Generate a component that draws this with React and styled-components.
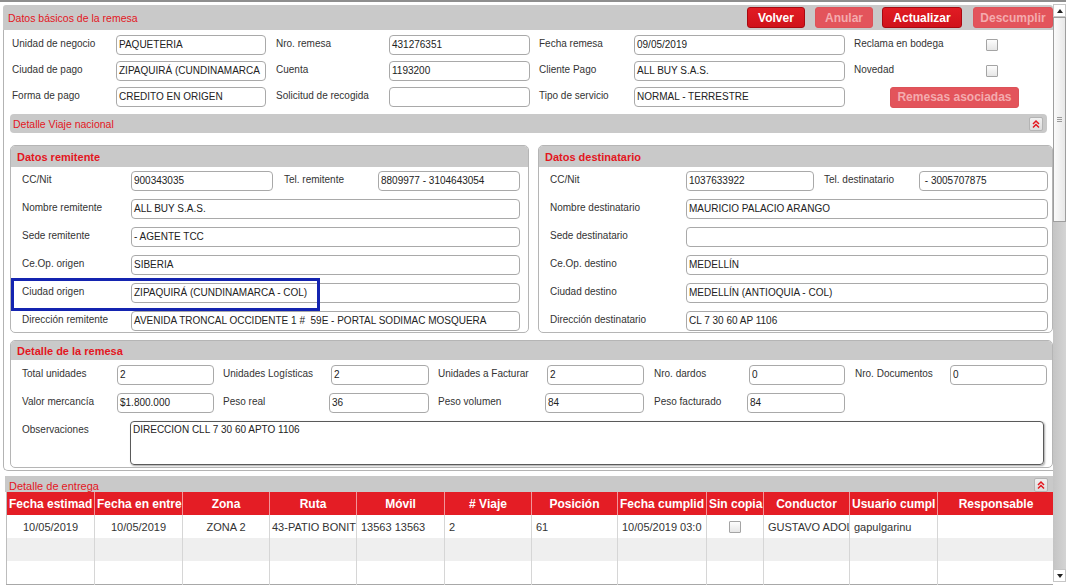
import React from "react";
import styled, { createGlobalStyle } from "styled-components";

const GlobalStyle = createGlobalStyle`
  html, body {
    margin: 0;
    padding: 0;
    background: #fff;
  }
  body {
    font-family: "Liberation Sans", Arial, sans-serif;
    font-size: 10px;
    color: #333;
  }
`;

const RED = "#e3161e";
const BAR = "#c9c9c9";

const Page = styled.div`
  width: 1075px;
  height: 585px;
  overflow: hidden;
  background: #fff;
`;

const Window = styled.div`
  width: 1066px;
  height: 585px;
  box-sizing: border-box;
  border-top: 2px solid #8e8e8e;
  display: flex;
`;

const Main = styled.div`
  width: 1053px;
  padding-top: 3px;
  display: flex;
  flex-direction: column;
  overflow: hidden;
`;

/* ---------- section 1 header ---------- */
const TopBar = styled.div`
  margin-left: 3px;
  height: 26px;
  background: ${BAR};
  border-radius: 3px 3px 0 0;
  display: flex;
  align-items: center;
  padding-left: 5px;
`;

const BarTitle = styled.span`
  color: ${RED};
  font-size: 10.5px;
`;

const Buttons = styled.div`
  margin-left: auto;
  display: flex;
  align-items: center;
`;

const Btn = styled.button`
  height: 21px;
  width: ${(p) => p.$w}px;
  margin-left: ${(p) => p.$ml || 0}px;
  padding: 0;
  font-family: "Liberation Sans", Arial, sans-serif;
  font-size: 12px;
  font-weight: bold;
  border-radius: 3px;
  border: 1px solid ${(p) => (p.$off ? "#dc5258" : "#a80910")};
  background: ${(p) =>
    p.$off ? "#e3545b" : "linear-gradient(#e11c24, #d0121a)"};
  color: ${(p) => (p.$off ? "#f4abae" : "#fff")};
`;

/* ---------- section 1 body ---------- */
const Body = styled.div`
  margin-left: 3px;
  border-left: 1px solid #b3b3b3;
  border-bottom: 1px solid #b3b3b3;
  border-radius: 0 0 0 5px;
  padding: 5px 0 2px 6px;
`;

const Row = styled.div`
  position: relative;
  display: flex;
  align-items: center;
  height: ${(p) => p.$h || 20}px;
  padding-left: ${(p) => p.$pl || 0}px;
  margin-bottom: ${(p) => (p.$last ? 0 : p.$mb ?? 6)}px;
`;

const Label = styled.span`
  width: ${(p) => p.$w}px;
  margin-left: ${(p) => p.$ml || 0}px;
  flex-shrink: 0;
  color: #333;
  font-size: 10px;
  white-space: nowrap;
  align-self: flex-start;
  padding-top: 3px;
`;

const Input = styled.div`
  box-sizing: border-box;
  width: ${(p) => p.$w}px;
  height: 20px;
  flex-shrink: 0;
  border: 1px solid #a9a9a9;
  border-radius: 4px;
  background: #fff;
  padding: 0 2px;
  font-size: 10px;
  line-height: 18px;
  color: #222;
  white-space: pre;
  overflow: hidden;
`;

const TextArea = styled.div`
  box-sizing: border-box;
  width: ${(p) => p.$w}px;
  height: 44px;
  border: 1px solid #5a5a5a;
  border-radius: 4px;
  box-shadow: 1px 1px 2px rgba(0, 0, 0, 0.35);
  padding: 2px 2px;
  font-size: 10px;
  line-height: 12px;
  color: #222;
`;

const Check = styled.span`
  display: inline-block;
  box-sizing: border-box;
  width: 12px;
  height: 12px;
  border: 1px solid #a4a4a4;
  border-radius: 1px;
  background: linear-gradient(#fdfdfd, #e6e6e6);
  vertical-align: middle;
`;

const SideBtn = styled(Btn)`
  margin-left: 45px;
`;

const SubBar = styled.div`
  margin-top: 7px;
  margin-right: 6px;
  height: 19px;
  background: ${BAR};
  border-radius: 4px;
  display: flex;
  align-items: center;
  justify-content: space-between;
  padding: 0 4px 0 3px;
`;

const Collapse = styled.span`
  box-sizing: border-box;
  width: 14px;
  height: 14px;
  display: flex;
  align-items: center;
  justify-content: center;
  background: linear-gradient(#f0f0f0, #dcdcdc);
  border: 1px solid #b4b4b4;
  border-radius: 2px;
`;

const Panels = styled.div`
  margin-top: 12px;
  display: flex;
  gap: 9px;
`;

const Panel = styled.div`
  width: ${(p) => p.$w}px;
  box-sizing: border-box;
  border: 1px solid #b5b5b5;
  border-radius: 5px;
  overflow: hidden;
  margin-top: ${(p) => p.$mt || 0}px;
`;

const PanelHead = styled.div`
  height: ${(p) => p.$h || 21}px;
  background: ${BAR};
  color: ${RED};
  font-weight: bold;
  font-size: 11px;
  display: flex;
  align-items: center;
  padding-left: 6px;
`;

const PanelBody = styled.div`
  padding: ${(p) => p.$pt || 4}px 8px ${(p) => p.$pb || 1}px 11px;
`;

const Highlight = styled.span`
  position: absolute;
  left: -11px;
  top: -5px;
  width: 309px;
  height: 33px;
  box-sizing: border-box;
  border: 3px solid #1424b0;
  pointer-events: none;
`;

/* ---------- delivery table ---------- */
const EntregaBar = styled.div`
  margin-top: 5px;
  margin-left: 5px;
  height: 16px;
  background: ${BAR};
  overflow: hidden;
  display: flex;
  justify-content: space-between;
  padding: 0 5px 0 4px;
`;

const EntregaTitle = styled.span`
  color: ${RED};
  font-size: 11px;
  line-height: 13px;
  padding-top: 4px;
`;

const SmallCollapse = styled(Collapse)`
  margin-top: 2px;
`;

const Table = styled.table`
  margin-left: 6px;
  width: 1048px;
  border-collapse: collapse;
  table-layout: fixed;
  border-left: 1px solid #bdbdbd;
`;

const Th = styled.th`
  height: 23px;
  padding: 0 2px;
  background: #e41d25;
  color: #fff;
  font-size: 12px;
  font-weight: bold;
  text-align: center;
  white-space: nowrap;
  overflow: hidden;
  border-right: 1px solid #f2959a;
`;

const Tr = styled.tr`
  background: ${(p) => (p.$alt ? "#efefef" : "#fff")};
  border-bottom: ${(p) => (p.$end ? "1px solid #a8a8a8" : "none")};
`;

const Td = styled.td`
  height: 23px;
  padding: 0 ${(p) => (p.$center ? 0 : 2)}px 0
    ${(p) => (p.$center ? 0 : p.$pl ?? 4)}px;
  font-size: 11px;
  color: #333;
  text-align: ${(p) => (p.$center ? "center" : "left")};
  white-space: nowrap;
  overflow: hidden;
  border-right: 1px solid #d6d6d6;
`;

/* ---------- scrollbar ---------- */
const Scroll = styled.div`
  width: 13px;
  display: flex;
  flex-direction: column;
  padding-top: 2px;
  box-sizing: border-box;
  background: #fff;
`;

const Arrow = styled.div`
  height: 13px;
  display: flex;
  align-items: center;
  justify-content: center;
  background: #fff;
  border: 1px solid #c6c6c6;
  box-sizing: border-box;
  margin-bottom: ${(p) => p.$mb || 0}px;
`;

const Thumb = styled.div`
  height: 205px;
  box-sizing: border-box;
  border: 1px solid #9e9e9e;
  background: linear-gradient(to right, #fafafa, #e8e8e8);
  display: flex;
  align-items: center;
  justify-content: center;
`;

const Grip = styled.span`
  width: 5px;
  height: 6px;
  background: repeating-linear-gradient(#9a9a9a 0 1px, transparent 1px 2px);
`;

const Track = styled.div`
  flex: 1;
  background: linear-gradient(to right, #c4c4c4, #d4d4d4);
`;

const DoubleUp = () => (
  <svg width="10" height="10" viewBox="0 0 10 10">
    <path
      d="M2 5 L5 2 L8 5 M2 8.5 L5 5.5 L8 8.5"
      fill="none"
      stroke={RED}
      strokeWidth="1.5"
    />
  </svg>
);

const Tri = ({ down }) => (
  <svg width="6" height="4" viewBox="0 0 6 4">
    <path d={down ? "M0 0 L6 0 L3 4 Z" : "M0 4 L6 4 L3 0 Z"} fill="#222" />
  </svg>
);

const cols = [88, 88, 87, 87, 88, 87, 86, 89, 57, 86, 88, 117];
const heads = [
  "Fecha estimad",
  "Fecha en entre",
  "Zona",
  "Ruta",
  "Móvil",
  "# Viaje",
  "Posición",
  "Fecha cumplid",
  "Sin copia",
  "Conductor",
  "Usuario cumpl",
  "Responsable",
];

export default function App() {
  return (
    <Page>
      <GlobalStyle />
      <Window>
        <Main>
          <TopBar>
            <BarTitle>Datos básicos de la remesa</BarTitle>
            <Buttons>
              <Btn $w={58}>Volver</Btn>
              <Btn $w={58} $ml={10} $off>
                Anular
              </Btn>
              <Btn $w={80} $ml={9}>
                Actualizar
              </Btn>
              <Btn $w={80} $ml={11} $off>
                Descumplir
              </Btn>
            </Buttons>
          </TopBar>

          <Body>
            <Row $pl={2}>
              <Label $w={104}>Unidad de negocio</Label>
              <Input $w={150}>PAQUETERIA</Input>
              <Label $w={113} $ml={10}>Nro. remesa</Label>
              <Input $w={141}>431276351</Input>
              <Label $w={95} $ml={9}>Fecha remesa</Label>
              <Input $w={211}>09/05/2019</Input>
              <Label $w={132} $ml={9}>Reclama en bodega</Label>
              <Check />
            </Row>
            <Row $pl={2}>
              <Label $w={104}>Ciudad de pago</Label>
              <Input $w={150}>ZIPAQUIRÁ (CUNDINAMARCA</Input>
              <Label $w={113} $ml={10}>Cuenta</Label>
              <Input $w={141}>1193200</Input>
              <Label $w={95} $ml={9}>Cliente Pago</Label>
              <Input $w={211}>ALL BUY S.A.S.</Input>
              <Label $w={132} $ml={9}>Novedad</Label>
              <Check />
            </Row>
            <Row $pl={2} $last>
              <Label $w={104}>Forma de pago</Label>
              <Input $w={150}>CREDITO EN ORIGEN</Input>
              <Label $w={113} $ml={10}>Solicitud de recogida</Label>
              <Input $w={141} />
              <Label $w={95} $ml={9}>Tipo de servicio</Label>
              <Input $w={211}>NORMAL - TERRESTRE</Input>
              <SideBtn $w={129} $off>
                Remesas asociadas
              </SideBtn>
            </Row>

            <SubBar>
              <BarTitle>Detalle Viaje nacional</BarTitle>
              <Collapse>
                <DoubleUp />
              </Collapse>
            </SubBar>

            <Panels>
              <Panel $w={519}>
                <PanelHead>Datos remitente</PanelHead>
                <PanelBody>
                  <Row $mb={8}>
                    <Label $w={109}>CC/Nit</Label>
                    <Input $w={142}>900343035</Input>
                    <Label $w={94} $ml={11}>Tel. remitente</Label>
                    <Input $w={142}>8809977 - 3104643054</Input>
                  </Row>
                  <Row $mb={8}>
                    <Label $w={109}>Nombre remitente</Label>
                    <Input $w={389}>ALL BUY S.A.S.</Input>
                  </Row>
                  <Row $mb={8}>
                    <Label $w={109}>Sede remitente</Label>
                    <Input $w={389}>- AGENTE TCC</Input>
                  </Row>
                  <Row $mb={8}>
                    <Label $w={109}>Ce.Op. origen</Label>
                    <Input $w={389}>SIBERIA</Input>
                  </Row>
                  <Row $mb={8}>
                    <Highlight />
                    <Label $w={109}>Ciudad origen</Label>
                    <Input $w={389}>ZIPAQUIRÁ (CUNDINAMARCA - COL)</Input>
                  </Row>
                  <Row $last>
                    <Label $w={109}>Dirección remitente</Label>
                    <Input $w={389}>
                      AVENIDA TRONCAL OCCIDENTE 1 #  59E - PORTAL SODIMAC MOSQUERA
                    </Input>
                  </Row>
                </PanelBody>
              </Panel>

              <Panel $w={515}>
                <PanelHead>Datos destinatario</PanelHead>
                <PanelBody>
                  <Row $mb={8}>
                    <Label $w={136}>CC/Nit</Label>
                    <Input $w={128}>1037633922</Input>
                    <Label $w={95} $ml={10}>Tel. destinatario</Label>
                    <Input $w={129}> - 3005707875</Input>
                  </Row>
                  <Row $mb={8}>
                    <Label $w={136}>Nombre destinatario</Label>
                    <Input $w={362}>MAURICIO PALACIO ARANGO</Input>
                  </Row>
                  <Row $mb={8}>
                    <Label $w={136}>Sede destinatario</Label>
                    <Input $w={362} />
                  </Row>
                  <Row $mb={8}>
                    <Label $w={136}>Ce.Op. destino</Label>
                    <Input $w={362}>MEDELLÍN</Input>
                  </Row>
                  <Row $mb={8}>
                    <Label $w={136}>Ciudad destino</Label>
                    <Input $w={362}>MEDELLÍN (ANTIOQUIA - COL)</Input>
                  </Row>
                  <Row $last>
                    <Label $w={136}>Dirección destinatario</Label>
                    <Input $w={362}>CL 7 30 60 AP 1106</Input>
                  </Row>
                </PanelBody>
              </Panel>
            </Panels>

            <Panel $w={1043} $mt={7}>
              <PanelHead $h={19}>Detalle de la remesa</PanelHead>
              <PanelBody $pt={5} $pb={2}>
                <Row $mb={8}>
                  <Label $w={95}>Total unidades</Label>
                  <Input $w={97}>2</Input>
                  <Label $w={108} $ml={9}>Unidades Logísticas</Label>
                  <Input $w={98}>2</Input>
                  <Label $w={109} $ml={9}>Unidades a Facturar</Label>
                  <Input $w={97}>2</Input>
                  <Label $w={95} $ml={10}>Nro. dardos</Label>
                  <Input $w={96}>0</Input>
                  <Label $w={95} $ml={10}>Nro. Documentos</Label>
                  <Input $w={97}>0</Input>
                </Row>
                <Row $mb={8}>
                  <Label $w={95}>Valor mercancía</Label>
                  <Input $w={97}>$1.800.000</Input>
                  <Label $w={106} $ml={9}>Peso real</Label>
                  <Input $w={100}>36</Input>
                  <Label $w={107} $ml={9}>Peso volumen</Label>
                  <Input $w={99}>84</Input>
                  <Label $w={93} $ml={10}>Peso facturado</Label>
                  <Input $w={98}>84</Input>
                </Row>
                <Row $h={44} $last>
                  <Label $w={108}>Observaciones</Label>
                  <TextArea $w={917}>DIRECCION CLL 7 30 60 APTO 1106</TextArea>
                </Row>
              </PanelBody>
            </Panel>
          </Body>

          <EntregaBar>
            <EntregaTitle>Detalle de entrega</EntregaTitle>
            <SmallCollapse>
              <DoubleUp />
            </SmallCollapse>
          </EntregaBar>

          <Table>
            <colgroup>
              {cols.map((w, i) => (
                <col key={i} style={{ width: w }} />
              ))}
            </colgroup>
            <thead>
              <tr>
                {heads.map((h) => (
                  <Th key={h}>{h}</Th>
                ))}
              </tr>
            </thead>
            <tbody>
              <Tr>
                <Td $center>10/05/2019</Td>
                <Td $center>10/05/2019</Td>
                <Td $center>ZONA 2</Td>
                <Td $pl={2}>43-PATIO BONIT</Td>
                <Td>13563 13563</Td>
                <Td>2</Td>
                <Td>61</Td>
                <Td>10/05/2019 03:0</Td>
                <Td $center>
                  <Check />
                </Td>
                <Td>GUSTAVO ADOL</Td>
                <Td>gapulgarinu</Td>
                <Td />
              </Tr>
              <Tr $alt>
                {cols.map((_, i) => (
                  <Td key={i} />
                ))}
              </Tr>
              <Tr $end>
                {cols.map((_, i) => (
                  <Td key={i} />
                ))}
              </Tr>
            </tbody>
          </Table>
        </Main>

        <Scroll>
          <Arrow>
            <Tri />
          </Arrow>
          <Thumb>
            <Grip />
          </Thumb>
          <Track />
          <Arrow $mb={3}>
            <Tri down />
          </Arrow>
        </Scroll>
      </Window>
    </Page>
  );
}
